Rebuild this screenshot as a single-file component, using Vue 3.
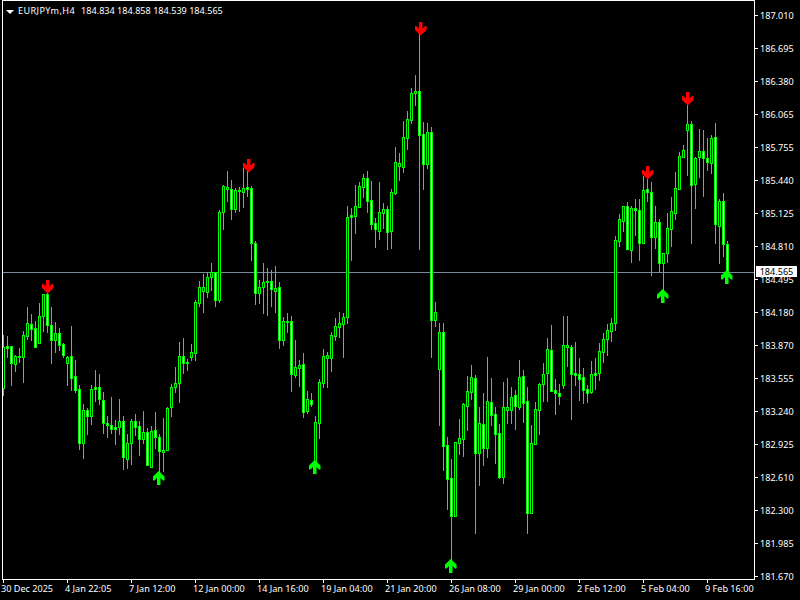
<script setup>
import { computed } from "vue";

// hi, body top, body bottom, lo, filled (pixel rows read off the chart)
const rows = [
  [335,347,388,395,0],[336,346,348,357,1],[346,346,363,385,1],[355,356,364,371,0],[348,356,357,362,1],[331,335,357,382,0],
  [307,323,336,339,0],[314,324,329,340,1],[321,328,347,347,1],[303,316,343,343,0],[294,294,316,331,0],[288,294,325,332,1],
  [307,325,340,363,1],[322,333,340,352,0],[328,333,345,350,1],[343,344,355,357,1],[356,357,363,385,0],[326,356,378,390,1],
  [360,376,390,392,1],[385,389,443,449,1],[404,410,443,458,0],[408,410,416,434,1],[385,389,416,424,0],[370,387,389,401,1],
  [374,387,399,404,1],[392,400,423,433,1],[416,423,425,437,1],[397,425,429,433,1],[420,427,429,444,1],[399,421,427,434,0],
  [416,421,457,469,1],[434,443,459,468,0],[419,421,443,464,0],[414,421,427,435,1],[421,426,439,455,1],[411,432,439,443,0],
  [428,432,465,465,1],[426,431,467,467,0],[412,430,437,448,1],[434,437,451,473,1],[418,450,452,471,0],[407,408,450,450,0],
  [384,387,407,416,0],[367,383,387,392,0],[342,356,383,402,0],[338,356,363,373,1],[359,362,363,370,1],[344,352,357,360,0],
  [300,302,353,360,0],[281,287,303,306,0],[274,287,291,312,0],[272,277,292,297,0],[263,272,277,290,0],[272,272,300,306,1],
  [210,212,300,302,0],[185,186,212,229,0],[171,187,189,201,0],[180,189,209,219,1],[188,190,209,212,0],[187,190,191,211,1],
  [168,188,192,207,0],[167,187,189,196,1],[186,188,243,260,1],[241,243,293,304,1],[280,287,293,303,0],[263,282,287,313,0],
  [268,281,282,315,1],[270,281,289,306,1],[266,288,291,312,0],[282,287,340,348,1],[317,321,340,345,0],[313,321,322,332,1],
  [316,321,374,391,1],[340,367,375,377,0],[360,365,368,386,0],[353,364,412,417,1],[391,399,411,413,0],[393,400,404,406,1],
  [416,422,463,470,0],[379,382,423,438,0],[349,356,383,387,0],[352,355,358,387,0],[332,335,358,371,0],[318,326,336,340,0],
  [312,323,327,337,0],[313,317,324,357,0],[206,217,317,323,0],[208,215,217,260,1],[185,206,216,233,0],[182,186,207,207,0],
  [174,178,187,197,0],[171,178,201,212,1],[181,200,224,229,1],[218,223,229,247,1],[182,212,231,239,0],[203,209,213,228,0],
  [206,209,232,249,1],[189,192,231,248,0],[147,162,193,194,0],[153,163,166,180,0],[121,137,167,172,0],[111,119,138,149,0],
  [88,93,120,123,0],[75,91,93,105,0],[30,91,135,249,1],[122,134,164,189,1],[123,132,164,168,0],[127,132,320,357,1],
  [302,312,320,326,0],[323,332,369,425,0],[323,332,446,470,1],[437,445,479,509,1],[459,478,516,560,1],[442,442,516,516,0],
  [419,438,443,454,0],[403,404,439,456,0],[376,391,406,430,0],[365,377,392,399,0],[375,378,453,533,1],[407,423,453,485,0],
  [393,424,448,465,1],[357,401,448,457,0],[378,402,415,425,1],[407,414,434,463,1],[424,433,477,478,1],[382,407,477,483,0],
  [378,407,410,423,0],[387,397,410,423,0],[390,395,406,429,1],[360,377,407,409,0],[370,376,403,422,1],[387,401,513,533,1],
  [425,443,513,513,0],[402,409,444,444,0],[383,384,410,434,0],[363,374,384,401,0],[338,349,373,401,0],[325,350,391,391,1],
  [379,390,393,414,1],[384,393,396,404,1],[316,345,385,388,0],[316,345,347,366,0],[345,347,374,419,1],[342,373,375,385,1],
  [358,374,379,400,1],[368,377,390,403,1],[385,389,393,402,1],[361,374,392,393,0],[358,373,375,389,1],[343,351,373,380,0],
  [333,339,352,362,0],[324,330,339,355,0],[318,323,331,341,0],[236,240,323,330,0],[214,219,241,246,0],[206,206,221,231,0],
  [202,206,249,249,1],[206,208,250,262,0],[199,208,210,235,1],[199,210,243,260,1],[176,190,243,243,0],[173,189,192,201,1],
  [182,192,237,275,1],[206,222,237,248,0],[219,222,263,272,1],[253,253,263,290,0],[213,228,253,262,0],[197,211,229,246,0],
  [172,188,213,219,0],[152,156,189,189,0],[145,150,157,157,0],[100,124,130,175,0],[121,124,185,243,1],[157,158,184,208,0],
  [129,151,157,177,0],[130,151,158,196,1],[138,158,162,170,1],[135,138,163,173,0],[123,137,224,243,1],[199,201,226,263,0],
  [193,201,244,256,1],[241,244,272,275,1],
];

const bars = computed(() =>
  rows.map((r, i) => ({ x: 3 + 4 * i, hi: r[0], top: r[1], bottom: r[2], lo: r[3], filled: r[4] === 1 }))
);

const sellArrows = [[42, 280], [243, 159], [415, 22], [642, 166], [682, 92]];
const buyArrows = [[153, 471], [309, 460], [445, 559], [657, 289], [721, 270]];

const prices = [
  "187.010", "186.695", "186.380", "186.065", "185.755", "185.440", "185.125", "184.810", "184.495",
  "184.180", "183.870", "183.555", "183.240", "182.925", "182.610", "182.300", "181.985", "181.670",
];
const times = [
  "30 Dec 2025", "4 Jan 22:05", "7 Jan 12:00", "12 Jan 00:00", "14 Jan 16:00", "19 Jan 04:00",
  "21 Jan 20:00", "26 Jan 08:00", "29 Jan 00:00", "2 Feb 12:00", "5 Feb 04:00", "9 Feb 16:00",
];
</script>

<template>
  <div class="terminal">
    <div class="plot">
      <div class="legend">
        <span class="caret"></span>
        <span class="symbol">EURJPYm,H4</span>
        <span class="ohlc">184.834 184.858 184.539 184.565</span>
      </div>
      <svg class="candles" width="751" height="578" viewBox="3 1 751 578">
        <rect class="bid" x="3" y="272" width="751" height="1" />
        <g v-for="b in bars" :key="b.x">
          <rect class="wick" :x="b.x" :y="b.hi" width="1" :height="b.lo - b.hi + 1" />
          <rect
            :class="b.filled ? 'body down' : 'body up'"
            :x="b.x - 0.5"
            :y="b.top + 0.5"
            width="2"
            :height="b.bottom - b.top"
          />
        </g>
        <path
          v-for="a in sellArrows"
          :key="a[0]"
          class="sell"
          :transform="`translate(${a[0]} ${a[1]})`"
          d="M5.75 13.5L11.5 8V4H10L7.5 6.5V0H4V6.5L1.5 4H0V8Z"
        />
        <path
          v-for="a in buyArrows"
          :key="a[0]"
          class="buy"
          :transform="`translate(${a[0]} ${a[1]})`"
          d="M5.75 0L11.5 5.5V9.5H10L7.5 7V14H4V7L1.5 9.5H0V5.5Z"
        />
      </svg>
    </div>

    <div class="price-axis">
      <div v-for="p in prices" :key="p" class="price">{{ p }}</div>
    </div>

    <div class="time-axis">
      <div v-for="t in times" :key="t" class="time">{{ t }}</div>
    </div>

    <div class="bid-label">184.565</div>
  </div>
</template>

<style>
html,
body {
  background: #000;
  overflow: hidden;
}
</style>

<style scoped>
.terminal {
  position: relative;
  width: 800px;
  height: 600px;
  background: #000;
  color: #fff;
  display: grid;
  grid-template-columns: 755px 45px;
  grid-template-rows: 580px 20px;
  overflow: hidden;
  font-family: "Noto Sans", "Liberation Sans", sans-serif;
  font-size: 9.1px;
  line-height: 11px;
}

.plot {
  position: relative;
  margin-left: 2px;
  border: 1px solid #fff;
}

.candles {
  display: block;
}

.legend {
  position: absolute;
  top: 4px;
  left: 3px;
  display: flex;
  align-items: center;
  white-space: nowrap;
}

.caret {
  width: 0;
  height: 0;
  margin: 2px 4px 0 0;
  border-left: 4px solid transparent;
  border-right: 4px solid transparent;
  border-top: 4px solid #fff;
}

.symbol {
  letter-spacing: 0.4px;
}

.ohlc {
  margin-left: 6px;
}

.bid {
  fill: #778899;
}

.wick {
  fill: #00ff00;
  shape-rendering: crispEdges;
}

.body {
  stroke: #00ff00;
  stroke-width: 1;
  shape-rendering: crispEdges;
}

.up {
  fill: #000;
}

.down {
  fill: #fff;
}

.sell {
  fill: #ff0000;
}

.buy {
  fill: #00ff00;
}

.price-axis {
  margin-top: -1px;
}

.price {
  display: flex;
  align-items: center;
  height: 33px;
}

.price::before {
  content: "";
  width: 3px;
  height: 1px;
  margin-right: 2px;
  background: #fff;
}

.time-axis {
  grid-column: 1 / -1;
  display: flex;
  padding-left: 1px;
  white-space: nowrap;
}

.time {
  position: relative;
  flex: 0 0 64px;
  padding-top: 3px;
}

.time::before {
  content: "";
  position: absolute;
  top: 0;
  left: 2px;
  width: 1px;
  height: 3px;
  background: #fff;
}

.bid-label {
  position: absolute;
  top: 266px;
  left: 756px;
  width: 41px;
  height: 11px;
  background: #fff;
  color: #000;
  text-align: center;
}
</style>
